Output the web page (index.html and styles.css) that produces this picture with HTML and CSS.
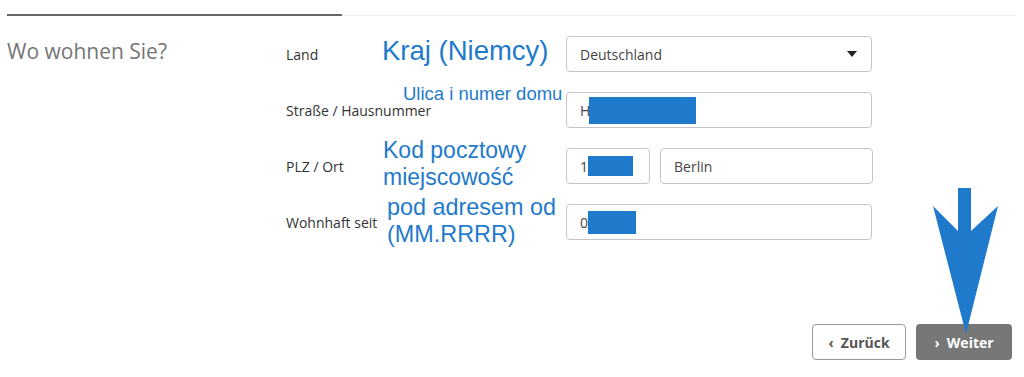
FILE: index.html
```html
<!DOCTYPE html>
<html lang="de">
<head>
  <meta charset="UTF-8">
  <meta name="viewport" content="width=device-width, initial-scale=1.0">
  <title>Wo wohnen Sie?</title>
  <link rel="stylesheet" href="styles.css">
</head>
<body>
  <!-- Fortschrittsbalken -->
  <div class="progress">
    <div class="progress-done"></div>
    <div class="progress-rest"></div>
  </div>

  <div class="section">
    <h2 class="section-title">Wo wohnen Sie?</h2>

    <form class="form">
      <div class="row">
        <label class="label">Land</label>
        <div class="field select">
          <span>Deutschland</span>
          <span class="caret"></span>
        </div>
      </div>

      <div class="row">
        <label class="label">Straße / Hausnummer</label>
        <div class="field"><span>H</span><span class="redact redact-street"></span></div>
      </div>

      <div class="row">
        <label class="label">PLZ / Ort</label>
        <div class="field-pair">
          <div class="field field-plz"><span>1</span><span class="redact redact-plz"></span></div>
          <div class="field field-city"><span>Berlin</span></div>
        </div>
      </div>

      <div class="row">
        <label class="label">Wohnhaft seit</label>
        <div class="field"><span>0</span><span class="redact redact-date"></span></div>
      </div>
    </form>

    <!-- Notizen (Übersetzung) -->
    <div class="note note-land">Kraj (Niemcy)</div>
    <div class="note note-street">Ulica i numer domu</div>
    <div class="note note-plz">Kod pocztowy<br>miejscowość</div>
    <div class="note note-date">pod adresem od<br>(MM.RRRR)</div>
  </div>

  <div class="actions">
    <button class="btn btn-back">&#8249;&nbsp; Zurück</button>
    <button class="btn btn-next">&#8250;&nbsp; Weiter</button>
  </div>

  <svg class="arrow" width="70" height="150" viewBox="0 0 70 150">
    <polygon points="25,0 38,0 38,43 65,18 33,146 0,18 25,43" fill="#1f7acb"/>
  </svg>
</body>
</html>
```

FILE: styles.css
```css
body {
  margin: 0;
  width: 1024px;
  height: 377px;
  position: relative;
  overflow: hidden;
  background: #fff;
  font-family: "Open Sans", "Noto Sans", sans-serif;
  color: #333;
}

.progress {
  display: flex;
  align-items: center;
  padding: 14px 9px 0 7px;
  height: 2px;
}

.progress-done {
  width: 335px;
  height: 2px;
  background: #666;
}

.progress-rest {
  flex: 1;
  height: 1px;
  background: #eee;
}

.section {
  display: flex;
  padding: 20px 0 0 7px;
  position: relative;
}

.section-title {
  width: 279px;
  margin: 0;
  padding-top: 1px;
  font-size: 21px;
  font-weight: 400;
  line-height: 28px;
  color: #757575;
}

.form {
  display: flex;
  flex-direction: column;
  gap: 20px;
}

.row {
  display: flex;
  align-items: center;
  height: 36px;
}

.label {
  width: 280px;
  font-size: 14px;
  color: #333;
}

.field {
  box-sizing: border-box;
  width: 306px;
  height: 36px;
  border: 1px solid #c4c4c4;
  border-radius: 4px;
  display: flex;
  align-items: center;
  padding: 0 13px;
  font-size: 14px;
  color: #444;
}

.select {
  justify-content: space-between;
  padding-right: 14px;
}

.caret {
  width: 0;
  height: 0;
  border-left: 5px solid transparent;
  border-right: 5px solid transparent;
  border-top: 6px solid #222;
}

.field-pair {
  display: flex;
  gap: 10px;
}

.field-plz {
  width: 84px;
}

.field-city {
  width: 213px;
}

.redact {
  display: inline-block;
  background: #1f7acb;
}

.redact-street {
  width: 107px;
  height: 27px;
  margin-left: -1px;
}

.redact-plz {
  width: 45px;
  height: 20px;
}

.redact-date {
  width: 48px;
  height: 23px;
}

.note {
  position: absolute;
  font-family: "Liberation Sans", Arial, sans-serif;
  color: #1f7acb;
  line-height: 27px;
}

.note-land {
  left: 382px;
  top: 19px;
  font-size: 27.5px;
  line-height: 32px;
}

.note-street {
  left: 403px;
  top: 67px;
  font-size: 18.5px;
  line-height: 22px;
}

.note-plz {
  left: 383px;
  top: 121px;
  font-size: 23px;
}

.note-date {
  left: 387px;
  top: 178px;
  font-size: 23.4px;
}

.actions {
  display: flex;
  justify-content: flex-end;
  gap: 10px;
  padding: 84px 12px 0 0;
}

.btn {
  box-sizing: border-box;
  height: 36px;
  border-radius: 4px;
  font-family: "Open Sans", sans-serif;
  font-size: 14px;
  font-weight: 700;
  cursor: pointer;
}

.btn-back {
  width: 94px;
  background: #fff;
  border: 1px solid #999;
  color: #555;
}

.btn-next {
  width: 96px;
  background: #777;
  border: none;
  color: #fff;
}

.arrow {
  position: absolute;
  left: 933px;
  top: 188px;
}
```
